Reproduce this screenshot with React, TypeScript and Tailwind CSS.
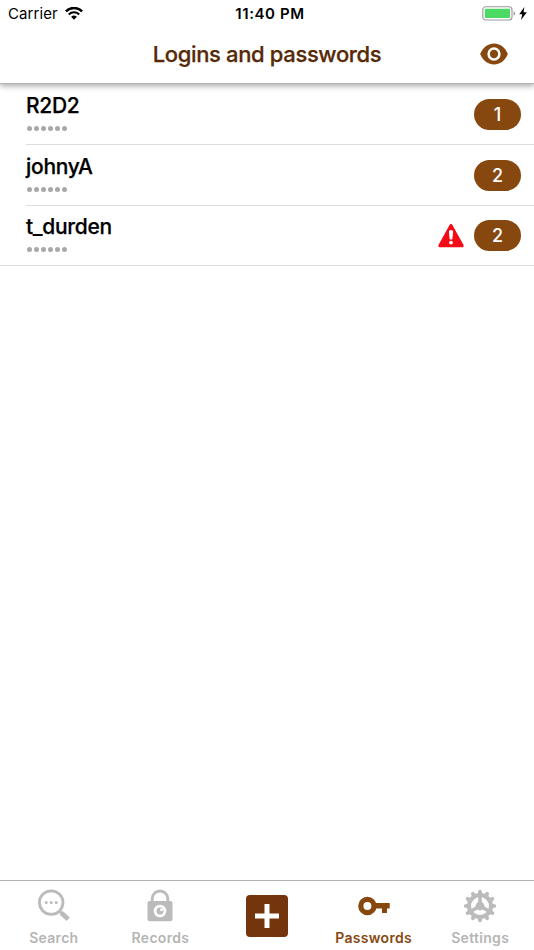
import type { ReactNode } from "react";

interface Login {
    name: string;
    count: number;
    warning?: boolean;
}

interface TabProps {
    label: string;
    icon: ReactNode;
    active?: boolean;
}

const logins: Login[] = [
    { name: "R2D2", count: 1 },
    { name: "johnyA", count: 2 },
    { name: "t_durden", count: 2, warning: true },
];

const WifiIcon = () => (
    <svg width="18" height="13" viewBox="0 0 18 13" fill="none">
        <path d="M.9 4.3a11.6 11.6 0 0 1 16.2 0" stroke="#000" strokeWidth="2.5" />
        <path d="M3.8 7.4a7.5 7.5 0 0 1 10.4 0" stroke="#000" strokeWidth="2.1" />
        <path d="M6.1 9.8a4.2 4.2 0 0 1 5.8 0L9 12.8z" fill="#000" />
    </svg>
);

const BatteryIcon = () => (
    <svg width="34" height="15" viewBox="0 0 34 15">
        <rect x=".8" y=".8" width="29.2" height="13.2" rx="3" fill="#fff" stroke="#999" strokeWidth="1.1" />
        <rect x="2.8" y="2.8" width="25.2" height="9.2" rx="1" fill="#4cd964" />
        <path d="M31.6 5.2c2 .7 2 3.7 0 4.4z" fill="#999" />
    </svg>
);

const BoltIcon = () => (
    <svg width="8" height="13" viewBox="0 0 8 13">
        <path d="M5.4 0 .2 7.3h3L2 13l5.8-7.7H4.6z" fill="#000" />
    </svg>
);

const EyeIcon = () => (
    <svg width="28" height="22" viewBox="0 0 28 22">
        <path
            d="M14 .5c5.8 0 10.600 3.400 13.900 10.500C24.600 18.100 19.800 21.500 14 21.500S3.400 18.100.1 11C3.400 3.900 8.200.5 14 .5z"
            fill="#87480f"
        />
        <circle cx="14" cy="11" r="5.400" fill="#87480f" stroke="#fff" strokeWidth="2.500" />
    </svg>
);

const WarningIcon = () => (
    <svg width="26" height="24" viewBox="0 0 26 24">
        <path d="M13 1.500 24.200 21.700H1.800z" fill="#f10c17" stroke="#f10c17" strokeWidth="3" strokeLinejoin="round" />
        <path d="M10.900 7.700q0-1.700 2.100-1.700t2.100 1.700l-.7 7.200q-1.400 1.400-2.800 0z" fill="#fff" />
        <circle cx="13" cy="18.600" r="1.900" fill="#fff" />
    </svg>
);

const SearchIcon = () => (
    <svg width="34" height="34" viewBox="0 0 34 34">
        <circle cx="14.200" cy="13.600" r="11.800" fill="none" stroke="#bbb" strokeWidth="2.800" />
        <circle cx="9.200" cy="13.600" r="1.500" fill="#bbb" />
        <circle cx="14.200" cy="13.600" r="1.500" fill="#bbb" />
        <circle cx="19.200" cy="13.600" r="1.500" fill="#bbb" />
        <path d="m22 21.500 3 3" stroke="#bbb" strokeWidth="2.200" />
        <path d="m25 24.500 6.200 5.800" stroke="#bbb" strokeWidth="4.600" />
        <circle cx="25" cy="24.400" r="2.200" fill="#bbb" />
    </svg>
);

const LockIcon = () => (
    <svg width="26" height="34" viewBox="0 0 26 34">
        <path d="M5.200 14v-4.200a7.800 7.800 0 0 1 15.600 0V14" fill="none" stroke="#bbb" strokeWidth="2.800" />
        <rect x=".5" y="11.900" width="25" height="20.300" rx="2" fill="#bbb" />
        <circle cx="13" cy="22" r="6.300" fill="#fff" />
        <circle cx="13" cy="22" r="3.500" fill="#bbb" />
        <circle cx="14.500" cy="20.700" r="1.500" fill="#fff" />
    </svg>
);

const KeyIcon = () => (
    <svg width="34" height="34" viewBox="0 0 34 34">
        <circle cx="10.400" cy="17" r="6.600" fill="none" stroke="#87480f" strokeWidth="5.200" />
        <path d="M18 14h14.700v5.500H30V24h-5v-4.500h-7z" fill="#87480f" />
    </svg>
);

const GearIcon = () => (
    <svg width="34" height="34" viewBox="0 0 34 34">
        <circle cx="17" cy="17" r="11" fill="none" stroke="#bbb" strokeWidth="4" />
        {Array.from({ length: 12 }, (_, i) => (
            <path
                key={i}
                d="m14.700 4.800.8-3.500q1.500-.9 3 0l.8 3.500z"
                fill="#bbb"
                transform={`rotate(${i * 30} 17 17)`}
            />
        ))}
        <circle cx="17" cy="17" r="4.400" fill="#bbb" />
        {[0, 120, 240].map((angle) => (
            <path key={angle} d="M15.200 15V5h3.600v10z" fill="#bbb" transform={`rotate(${angle} 17 17)`} />
        ))}
    </svg>
);

const LoginRow = ({ login, last }: { login: Login; last: boolean }) => (
    <li className={last ? "border-b border-[#dedede]" : ""}>
        <div
            className={`ml-[26px] flex items-center pr-[13px] ${
                last ? "h-[59px]" : "h-[61px] border-b border-[#dedede]"
            }`}
        >
            <div className="flex-1">
                <h2 className="text-[21px] leading-[26px] font-medium tracking-[-0.3px] [-webkit-text-stroke:0.25px_#000]">
                    {login.name}
                </h2>
                <div className="mt-[7px] mb-[5px] ml-[1px] flex gap-[2.1px]">
                    {Array.from({ length: 6 }, (_, i) => (
                        <span key={i} className="size-[5px] rounded-full bg-[#a8a8a8]" />
                    ))}
                </div>
            </div>
            {login.warning && (
                <div className="mr-[10px]">
                    <WarningIcon />
                </div>
            )}
            <span className="flex h-[31px] w-[47px] items-center justify-center rounded-full bg-[#87480f] pt-[1px] text-lg font-medium text-white">
                {login.count}
            </span>
        </div>
    </li>
);

const Tab = ({ label, icon, active }: TabProps) => (
    <button className="flex w-[106px] flex-col items-center pt-2">
        {icon}
        <span
            className={`mt-[5px] text-sm leading-5 font-semibold tracking-[0.3px] ${
                active ? "text-[#87480f]" : "text-[#b5b5b5]"
            }`}
        >
            {label}
        </span>
    </button>
);

export default function App() {
    return (
        <div className="flex h-[950px] w-[534px] flex-col overflow-hidden bg-white font-['Inter',sans-serif] text-black">
            <header className="z-10 h-[84px] border-b border-[#b5b5b5] bg-white shadow-[0_2px_6px_rgba(0,0,0,0.35)]">
                <div className="grid h-[27px] grid-cols-3 items-center pr-[7px] pl-2">
                    <div className="flex items-center gap-[7px]">
                        <span className="pt-[2px] text-[15px] tracking-[0.1px]">Carrier</span>
                        <WifiIcon />
                    </div>
                    <span className="pt-[2px] pl-[5px] text-center text-[15px] font-semibold tracking-[0.6px]">
                        11:40 PM
                    </span>
                    <div className="flex items-center justify-end gap-[3px]">
                        <BatteryIcon />
                        <BoltIcon />
                    </div>
                </div>
                <div className="grid h-[54px] grid-cols-[1fr_auto_1fr] items-center pr-[26px] pl-[26px]">
                    <h1 className="col-start-2 text-[22px] font-medium tracking-[-0.36px] text-[#562907] [-webkit-text-stroke:0.25px_#562907]">
                        Logins and passwords
                    </h1>
                    <button className="justify-self-end">
                        <EyeIcon />
                    </button>
                </div>
            </header>

            <ul className="flex-1">
                {logins.map((login, i) => (
                    <LoginRow key={login.name} login={login} last={i === logins.length - 1} />
                ))}
            </ul>

            <nav className="flex h-[70px] justify-center gap-[0.6px] border-t border-[#b2b2b2]">
                <Tab label="Search" icon={<SearchIcon />} />
                <Tab label="Records" icon={<LockIcon />} />
                <button className="flex w-[106px] justify-center pt-[14px]">
                    <svg width="42" height="42" viewBox="0 0 42 42">
                        <rect width="42" height="42" rx="4" fill="#74350d" />
                        <path d="M21 9v24M9 21h24" stroke="#fff" strokeWidth="5" />
                    </svg>
                </button>
                <Tab label="Passwords" icon={<KeyIcon />} active />
                <Tab label="Settings" icon={<GearIcon />} />
            </nav>
        </div>
    );
}
